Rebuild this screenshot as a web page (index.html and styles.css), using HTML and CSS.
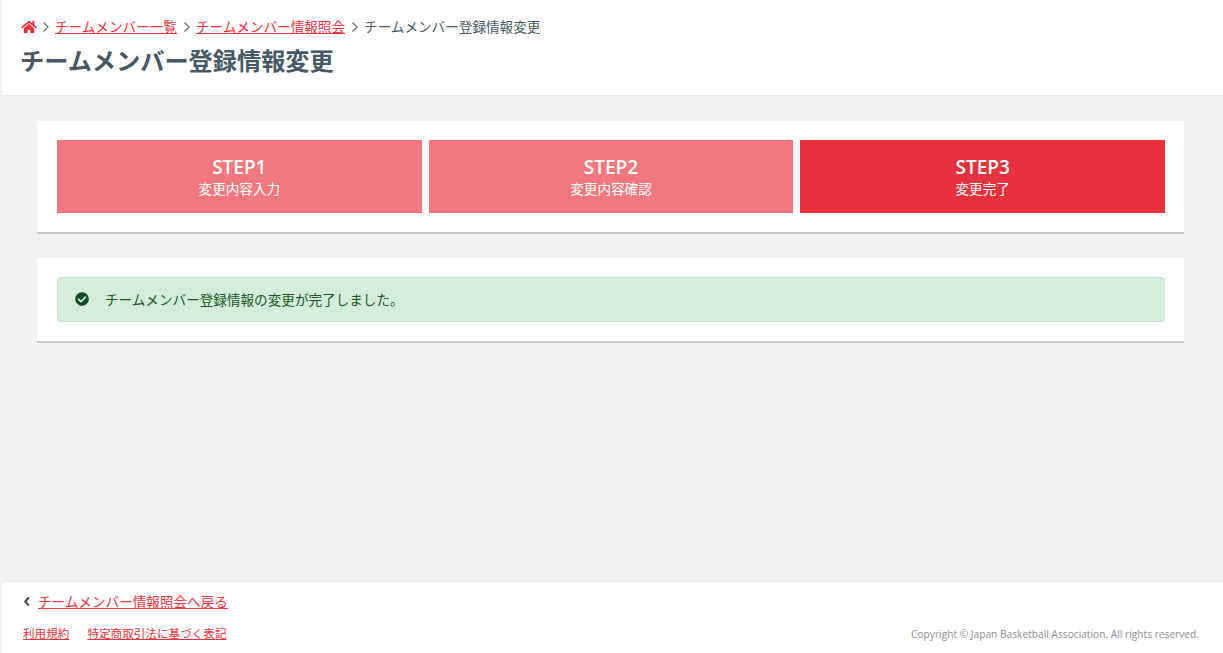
FILE: index.html
```html
<!DOCTYPE html>
<html lang="ja">
<head>
<meta charset="utf-8">
<title>チームメンバー登録情報変更</title>
<link rel="stylesheet" href="styles.css">
</head>
<body>
<div class="page">
  <header class="page-header">
    <nav class="crumbs">
      <a class="home" href="#" aria-label="ホーム"><svg viewBox="0 0 576 512" width="16" height="14"><path fill="#e8323c" d="M280.4 148.3 96 300.1V464a16 16 0 0 0 16 16l112-.3a16 16 0 0 0 15.9-16V368a16 16 0 0 1 16-16h64a16 16 0 0 1 16 16v95.6a16 16 0 0 0 16 16.1L464 480a16 16 0 0 0 16-16V300L295.700 148.300a12.200 12.200 0 0 0-15.300 0zM571.600 251.500 488 182.600V44.100a12 12 0 0 0-12-12h-56a12 12 0 0 0-12 12v72.600L318.500 43a48 48 0 0 0-61 0L4.300 251.500a12 12 0 0 0-1.600 16.900l25.500 31A12 12 0 0 0 45.200 301l235.200-193.700a12.200 12.200 0 0 1 15.300 0L530.900 301a12 12 0 0 0 16.900-1.600l25.500-31a12 12 0 0 0-1.700-16.900z"/></svg></a>
      <svg class="sep" viewBox="0 0 8 12" width="8" height="12"><path d="M1.500 1.500 6 6l-4.500 4.500" fill="none" stroke="#5f6b72" stroke-width="1.100"/></svg>
      <a href="#">チームメンバー一覧</a>
      <svg class="sep" viewBox="0 0 8 12" width="8" height="12"><path d="M1.500 1.500 6 6l-4.500 4.500" fill="none" stroke="#5f6b72" stroke-width="1.100"/></svg>
      <a href="#">チームメンバー情報照会</a>
      <svg class="sep" viewBox="0 0 8 12" width="8" height="12"><path d="M1.500 1.500 6 6l-4.500 4.500" fill="none" stroke="#5f6b72" stroke-width="1.100"/></svg>
      <span>チームメンバー登録情報変更</span>
    </nav>
    <h1>チームメンバー登録情報変更</h1>
  </header>
  <main class="content">
    <section class="card">
      <ol class="steps">
        <li class="step"><strong>STEP1</strong><span>変更内容入力</span></li>
        <li class="step"><strong>STEP2</strong><span>変更内容確認</span></li>
        <li class="step current"><strong>STEP3</strong><span>変更完了</span></li>
      </ol>
    </section>
    <section class="card">
      <div class="alert">
        <svg viewBox="0 0 512 512" width="14" height="14"><path fill="#0f4a23" d="M504 256c0 137-111 248-248 248S8 393 8 256 119 8 256 8s248 111 248 248zM227.300 387.300l184-184a16 16 0 0 0 0-22.600l-22.600-22.600a16 16 0 0 0-22.600 0L216 308.100l-70.100-70.100a16 16 0 0 0-22.600 0l-22.600 22.600a16 16 0 0 0 0 22.600l104 104a16 16 0 0 0 22.600.1z"/></svg>
        <span>チームメンバー登録情報の変更が完了しました。</span>
      </div>
    </section>
  </main>
  <footer class="page-footer">
    <div class="back">
      <svg viewBox="0 0 8 12" width="8" height="11"><path d="M6 1.500 2 6l4 4.500" fill="none" stroke="#37474f" stroke-width="2.200"/></svg>
      <a href="#">チームメンバー情報照会へ戻る</a>
    </div>
    <div class="foot-row">
      <div class="foot-links">
        <a href="#">利用規約</a>
        <a href="#">特定商取引法に基づく表記</a>
      </div>
      <small>Copyright © Japan Basketball Association. All rights reserved.</small>
    </div>
  </footer>
</div>
</body>
</html>
```
FILE: styles.css
```css
* { box-sizing: border-box; }
html, body { margin: 0; height: 100%; }
body {
  font-family: "Open Sans", "Noto Sans CJK JP", sans-serif;
  font-size: 13.6px;
  color: #455a64;
  background: #f2f2f2;
  overflow: hidden;
}
a { color: #e8323c; text-decoration: underline; }
.page {
  height: 653px;
  display: flex;
  flex-direction: column;
  border-left: 2px solid #f2f2f2;
}
.page-header {
  height: 96px;
  padding: 17px 18px 0;
  background: #fff;
  border-bottom: 1px solid #e8e8e8;
}
.crumbs {
  display: flex;
  align-items: center;
  height: 20px;
  line-height: 20px;
}
.crumbs .home { display: flex; margin: 0 5px 0 1px; }
.crumbs .sep { margin-right: 5px; }
.crumbs a:not(.home) { margin-right: 6px; }
h1 {
  margin: 7px 0 0;
  font-size: 24.2px;
  line-height: 34px;
  font-weight: 700;
  color: #455a64;
}
.content {
  flex: 1;
  padding: 25px 39px 0 35px;
  display: flex;
  flex-direction: column;
  gap: 24px;
}
.card {
  background: #fff;
  padding: 19px 19px 19px 20px;
  border-bottom: 2px solid #c8c8c8;
}
.steps {
  list-style: none;
  margin: 0;
  padding: 0;
  display: grid;
  grid-template-columns: repeat(3, 1fr);
  gap: 7px;
}
.step {
  height: 73px;
  background: #f2787e;
  color: #fff;
  display: flex;
  flex-direction: column;
  align-items: center;
  justify-content: center;
  padding-bottom: 2px;
}
.step.current { background: #e6323c; }
.step strong { font-size: 19px; line-height: 26px; font-weight: 600; }
.step span { font-size: 13.6px; line-height: 17px; }
.alert {
  height: 45px;
  display: flex;
  align-items: center;
  gap: 16px;
  padding: 0 17px 1px;
  background: #d4eddb;
  border: 1px solid #c3e6cb;
  border-radius: 4px;
  color: #155724;
}
.page-footer {
  height: 72px;
  background: #fff;
  border-top: 1px solid #e8e8e8;
  padding: 9px 24px 0 21px;
}
.back {
  display: flex;
  align-items: center;
  gap: 7px;
  height: 20px;
}
.foot-row {
  display: flex;
  justify-content: space-between;
  align-items: center;
  margin-top: 13px;
}
.foot-links { display: flex; gap: 18px; font-size: 11.6px; line-height: 18px; }
small { font-size: 10.2px; color: #8a8f93; line-height: 18px; margin-top: 1px; }
```
